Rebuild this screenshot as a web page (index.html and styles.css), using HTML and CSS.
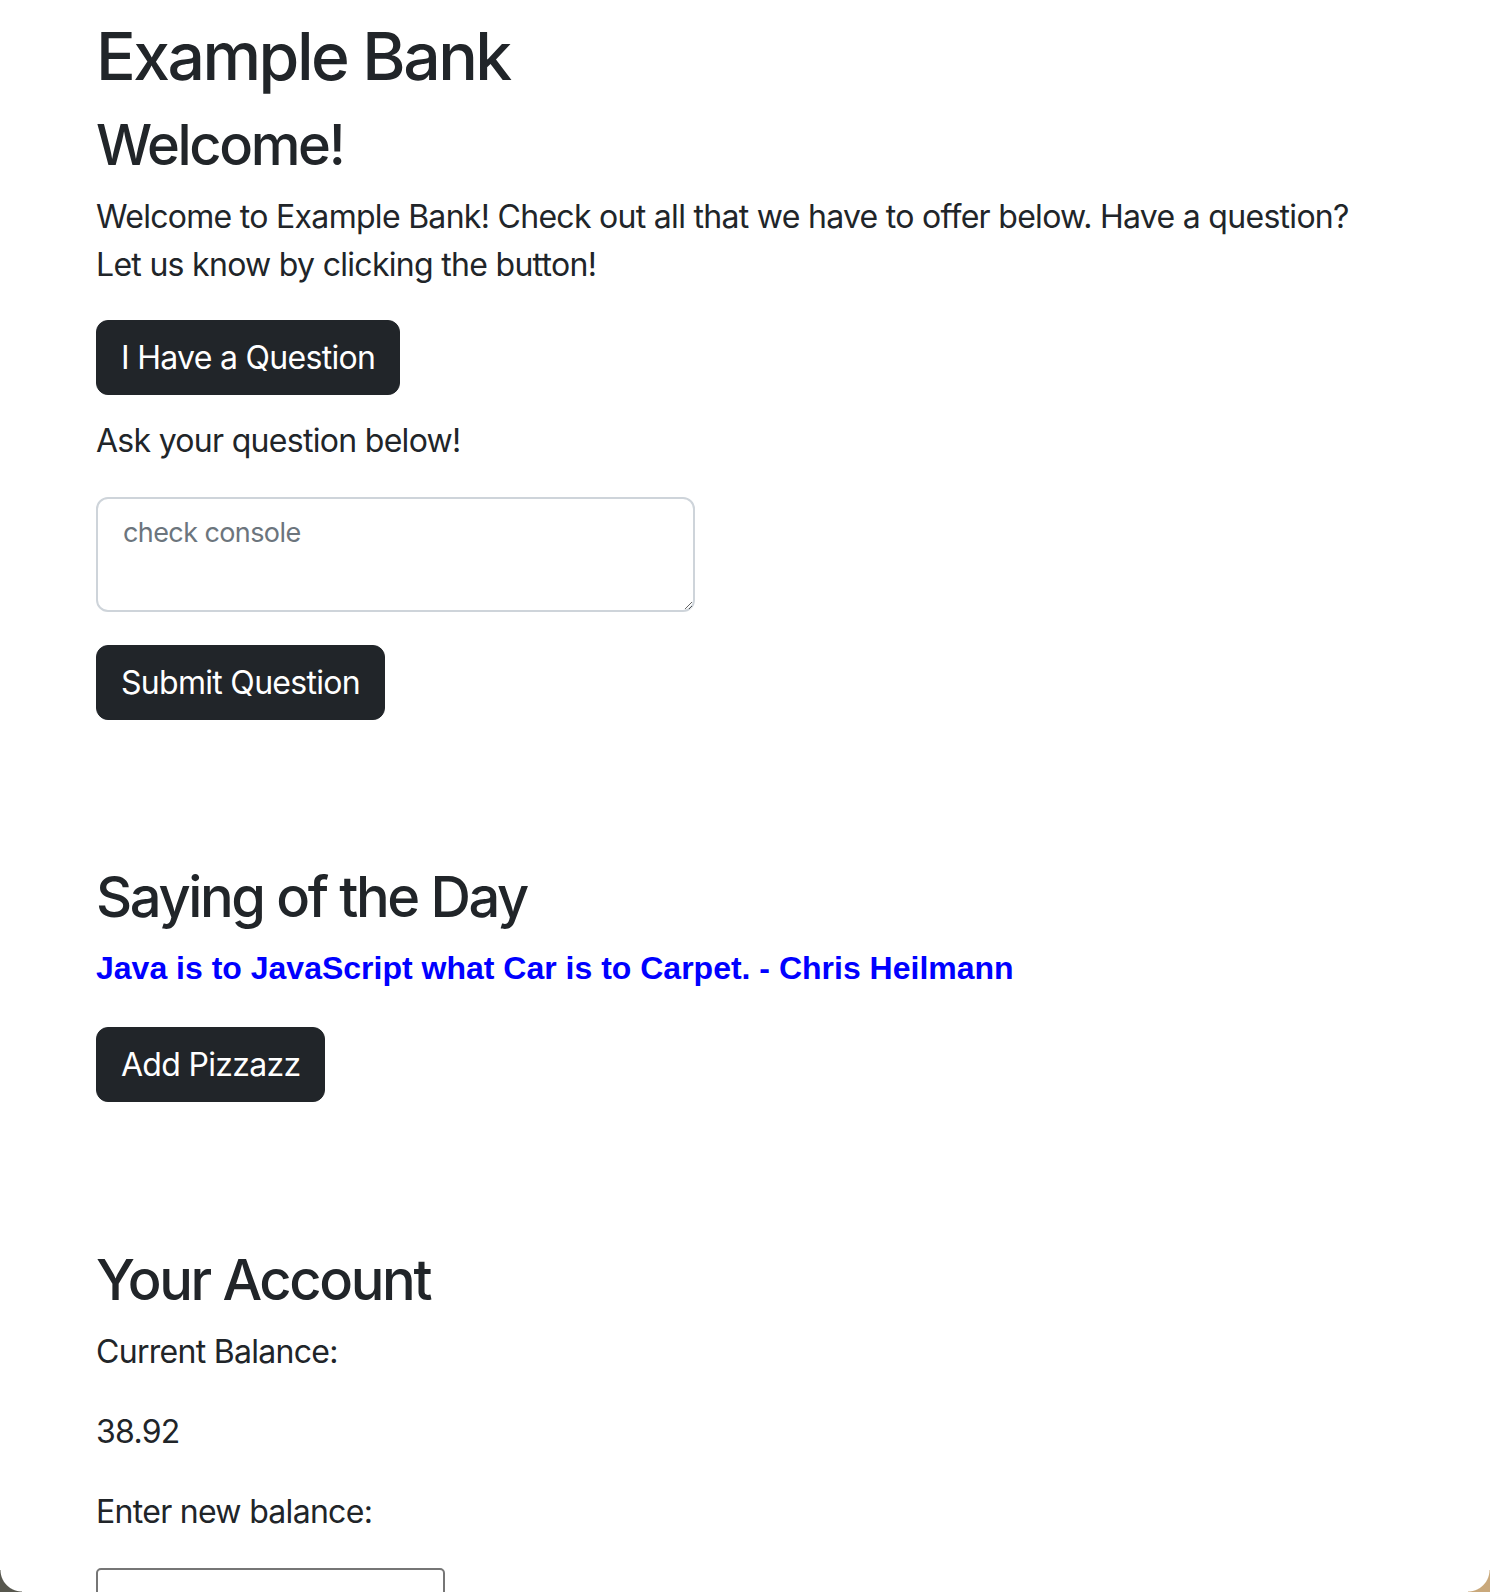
FILE: index.html
```html
<!DOCTYPE html>
<html lang="en">
<head>
<meta charset="utf-8">
<title>Example Bank</title>
<link rel="stylesheet" href="styles.css">
</head>
<body>
<div class="container">
  <h1 class="title">Example Bank</h1>
  <h2 class="heading">Welcome!</h2>
  <p class="text intro">Welcome to Example Bank! Check out all that we have to offer below. Have a question? Let us know by clicking the button!</p>
  <button class="btn">I Have a Question</button>
  <p class="text ask">Ask your question below!</p>
  <textarea class="question" placeholder="check console"></textarea>
  <button class="btn submit">Submit Question</button>

  <h2 class="heading section">Saying of the Day</h2>
  <p class="quote">Java is to JavaScript what Car is to Carpet. - Chris Heilmann</p>
  <button class="btn">Add Pizzazz</button>

  <h2 class="heading section account">Your Account</h2>
  <p class="text balance-label">Current Balance:</p>
  <p class="text">38.92</p>
  <p class="text">Enter new balance:</p>
  <input class="balance" type="text">
</div>
<div class="corner corner-left"></div>
<div class="corner corner-right"></div>
</body>
</html>
```

FILE: styles.css
```css
html, body {
  margin: 0;
  background: #fff;
}
body {
  font-family: Inter, "Noto Sans", sans-serif;
  font-size: 32px;
  line-height: 1.5;
  letter-spacing: -0.022em;
  color: #212529;
  overflow: hidden;
}
.container {
  padding: 17px 96px 0;
  display: flex;
  flex-direction: column;
  align-items: flex-start;
}
.title {
  margin: 0 0 16px;
  font-size: 66px;
  font-weight: 500;
  line-height: 1.2;
  letter-spacing: -0.038em;
}
.heading {
  margin: 0 0 16px;
  font-size: 56px;
  font-weight: 500;
  line-height: 1.2;
  letter-spacing: -0.042em;
}
.heading.section {
  margin-top: 144px;
}
.heading.account {
  margin-top: 145px;
}
.text {
  margin: 0 0 32px;
}
.balance-label {
  margin-top: -2px;
}
.intro {
  margin-top: -2px;
  margin-bottom: 31px;
}
.ask {
  margin-top: 22px;
}
.btn {
  font-family: inherit;
  font-size: 32px;
  line-height: 49px;
  letter-spacing: -0.022em;
  color: #fff;
  background: #212529;
  border: 1px solid #212529;
  border-radius: 12px;
  padding: 12px 24px;
  cursor: pointer;
}
.question {
  box-sizing: border-box;
  width: 599px;
  height: 115px;
  font-family: inherit;
  font-size: 27px;
  line-height: 48px;
  letter-spacing: -0.022em;
  color: #212529;
  padding: 10px 25px;
  border: 2px solid #ced4da;
  border-radius: 12px;
  margin: 0;
}
.question::placeholder {
  color: #6c757d;
}
.submit {
  margin-top: 33px;
}
.quote {
  margin: -4px 0 35px;
  font-family: "Liberation Sans", Arial, sans-serif;
  font-weight: bold;
  letter-spacing: 0;
  color: #0000ff;
}
.balance {
  box-sizing: border-box;
  width: 349px;
  height: 44px;
  border: 2px solid #767676;
  border-radius: 5px;
  font-size: 26px;
  margin: 0;
}
.corner {
  position: fixed;
  bottom: 0;
  width: 22px;
  height: 22px;
}
.corner-left {
  left: 0;
  background: radial-gradient(circle at 100% 0, transparent 21px, #57574e 22px);
}
.corner-right {
  right: 0;
  background: radial-gradient(circle at 0 0, transparent 21px, #c9a87b 22px);
}
```
